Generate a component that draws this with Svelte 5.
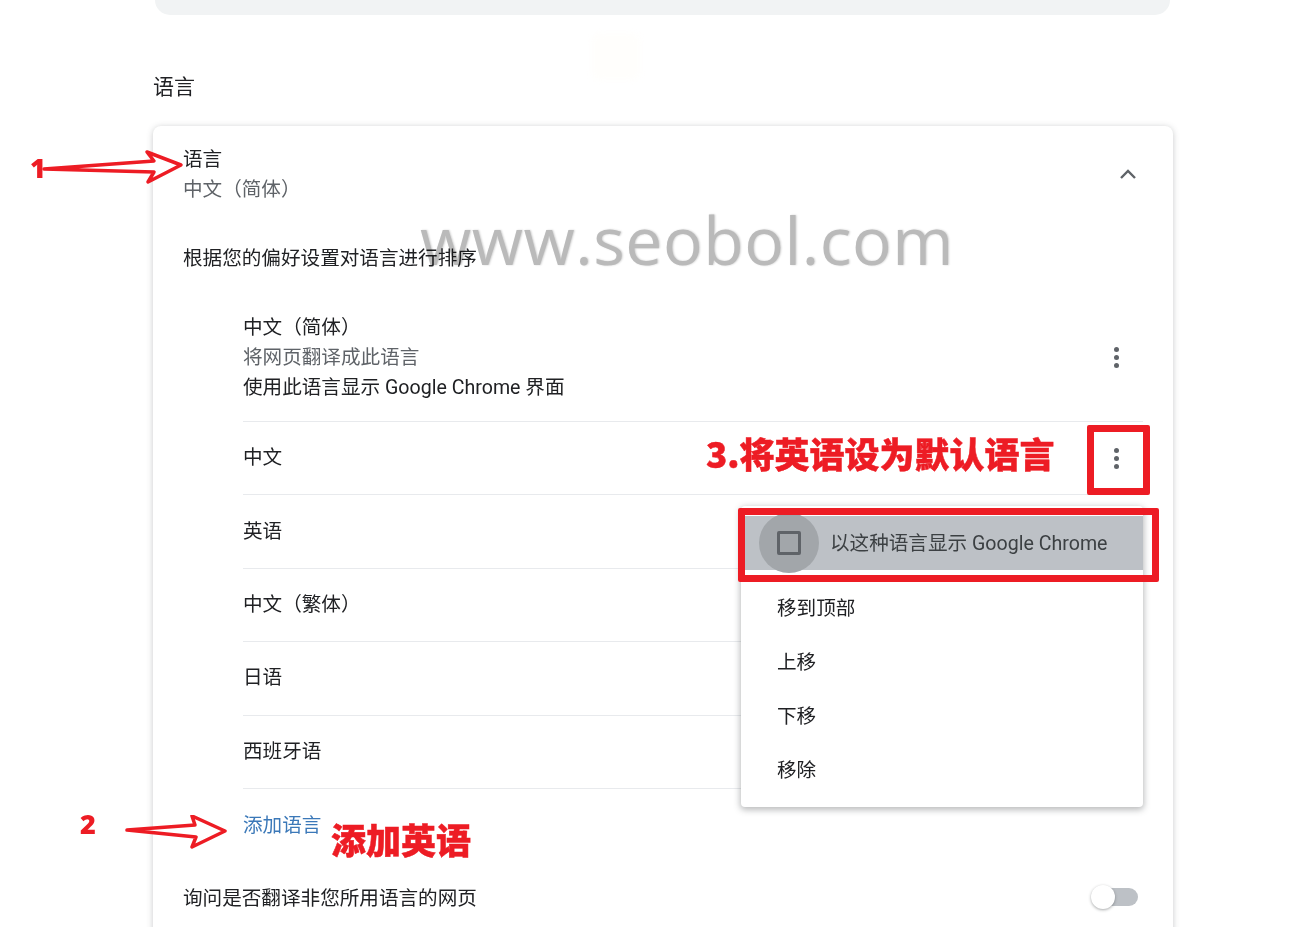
<script>
	const rows = ['英语', '中文（繁体）', '日语', '西班牙语'];
	const menuItems = ['移到顶部', '上移', '下移', '移除'];
</script>

<div class="page">
	<div class="topbar"></div>
	<h2 class="section">语言</h2>

	<section class="card">
		<header class="card-head">
			<div>
				<div class="title">语言</div>
				<div class="sub">中文（简体）</div>
			</div>
			<svg class="chevron" width="24" height="24" viewBox="0 0 24 24">
				<path d="M5 16 L12 9 L19 16" fill="none" stroke="#5f6368" stroke-width="2.4" />
			</svg>
		</header>

		<div class="order">根据您的偏好设置对语言进行排序</div>

		<ul class="langs">
			<li class="lang first">
				<div>
					<div class="line">中文（简体）</div>
					<div class="line muted">将网页翻译成此语言</div>
					<div class="line">使用此语言显示 Google Chrome 界面</div>
				</div>
				<span class="dots"><i></i><i></i><i></i></span>
			</li>
			<li class="lang">
				<span>中文</span>
				<span class="dots"><i></i><i></i><i></i></span>
			</li>
			{#each rows as row}
				<li class="lang"><span>{row}</span></li>
			{/each}
		</ul>

		<a class="add" href="#add">添加语言</a>

		<div class="ask">
			<span>询问是否翻译非您所用语言的网页</span>
			<span class="toggle"><span class="knob"></span></span>
		</div>
	</section>

	<div class="menu">
		<div class="menu-top">
			<span class="ripple"><span class="check"></span></span>
			<span class="menu-label">以这种语言显示 Google Chrome</span>
		</div>
		{#each menuItems as item}
			<div class="menu-item">{item}</div>
		{/each}
	</div>

	<div class="watermark">www.seobol.com</div>
	<div class="faint"></div>

	<div class="mark box-dots"></div>
	<div class="mark box-row"></div>
	<div class="note note-3">3.将英语设为默认语言</div>
	<div class="note note-add">添加英语</div>
	<div class="num num-1">1</div>
	<div class="num num-2">2</div>

	<svg class="arrow arrow-1" width="146" height="36" viewBox="0 0 146 36">
		<path d="M2 19 L112 11 L105 2 L139 15 L106 32 L112 22 Z" fill="#fff" stroke="#ed1c24" stroke-width="3.5" stroke-linejoin="round" />
	</svg>
	<svg class="arrow arrow-2" width="104" height="36" viewBox="0 0 104 36">
		<path d="M2 15 L70 10 L67 1 L100 16 L67 32 L71 22 Z" fill="#fff" stroke="#ed1c24" stroke-width="3.5" stroke-linejoin="round" />
	</svg>
</div>

<style>
	:global(body) {
		background: #fff;
	}

	.page {
		position: relative;
		height: 927px;
		overflow: hidden;
		padding-left: 153px;
		box-sizing: border-box;
		font-family: Roboto, "Noto Sans CJK SC", sans-serif;
		font-size: 19.6px;
		font-weight: 400;
		color: #202124;
	}

	.topbar {
		width: 1015px;
		height: 15px;
		margin-left: 2px;
		background: #f1f3f4;
		border-radius: 0 0 24px 24px;
	}

	.section {
		margin: 57px 0 24px;
		height: 30px;
		line-height: 30px;
		font-size: 21px;
		font-weight: 400;
	}

	.card {
		width: 1020px;
		height: 860px;
		box-sizing: border-box;
		padding: 19px 30px 0;
		background: #fff;
		border-radius: 8px;
		box-shadow: 0 1px 6px rgba(60, 64, 67, 0.28);
	}

	.card-head {
		display: flex;
		justify-content: space-between;
		align-items: center;
		height: 60px;
		padding-right: 2px;
	}

	.title {
		line-height: 30px;
	}

	.sub {
		line-height: 30px;
		color: #5f6368;
	}

	.chevron {
		margin-bottom: 2px;
		margin-right: 1px;
	}

	.order {
		margin-top: 39px;
		line-height: 30px;
	}

	.langs {
		list-style: none;
		margin: 31px 0 0;
		padding: 0 0 0 60px;
	}

	.lang {
		display: flex;
		justify-content: space-between;
		align-items: center;
		height: 73.4px;
		box-sizing: border-box;
		padding-right: 14px;
		border-bottom: 1px solid #e8eaed;
		line-height: 30px;
	}

	.lang.first {
		height: 117px;
		padding-bottom: 10px;
	}

	.first .dots {
		margin-bottom: 2px;
	}

	.muted {
		color: #5f6368;
	}

	.dots {
		display: flex;
		flex-direction: column;
		gap: 3px;
		margin-right: 10px;
	}

	.dots i {
		display: block;
		width: 5px;
		height: 5px;
		border-radius: 50%;
		background: #5f6368;
	}

	.add {
		display: block;
		margin: 22px 0 0 60px;
		line-height: 30px;
		color: #3b78b8;
		text-decoration: none;
	}

	.ask {
		display: flex;
		justify-content: space-between;
		align-items: center;
		margin-top: 41px;
		height: 30px;
		padding-right: 5px;
	}

	.toggle {
		position: relative;
		display: block;
		width: 36px;
		height: 18px;
		border-radius: 9px;
		background: #bdc1c6;
	}

	.knob {
		position: absolute;
		left: -11px;
		top: -3px;
		width: 24px;
		height: 24px;
		border-radius: 50%;
		background: #fff;
		box-shadow: 0 1px 3px rgba(60, 64, 67, 0.45);
	}

	.menu {
		position: absolute;
		left: 741px;
		top: 506px;
		width: 402px;
		height: 301px;
		box-sizing: border-box;
		padding-top: 10px;
		background: #fff;
		border-radius: 4px;
		box-shadow: 0 2px 6px 1px rgba(60, 64, 67, 0.35);
	}

	.menu-top {
		display: flex;
		align-items: center;
		height: 54px;
		margin-left: 4px;
		margin-bottom: 9px;
		background: #bdc1c6;
		color: #3c4043;
	}

	.menu-label {
		padding-bottom: 3px;
		margin-left: -1px;
	}

	.ripple {
		display: flex;
		justify-content: center;
		align-items: center;
		width: 60px;
		height: 60px;
		margin: 0 12px 0 14px;
		border-radius: 50%;
		background: #a2a6aa;
		flex: none;
	}

	.check {
		display: block;
		width: 24px;
		height: 24px;
		box-sizing: border-box;
		border: 3px solid #5f6368;
		border-radius: 2px;
	}

	.menu-item {
		display: flex;
		align-items: center;
		height: 54px;
		padding-left: 36px;
	}

	.watermark {
		position: absolute;
		left: 420px;
		top: 197px;
		font-family: "Open Sans", sans-serif;
		font-size: 66px;
		line-height: 84px;
		letter-spacing: 0.6px;
		font-weight: 400;
		color: #bababa;
		text-shadow: 1px 0 2px #d0d0d0;
		mix-blend-mode: multiply;
	}

	.faint {
		position: absolute;
		left: 592px;
		top: 33px;
		width: 48px;
		height: 47px;
		background: #fffefc;
		border-radius: 8px;
		filter: blur(3px);
	}

	.mark {
		position: absolute;
		box-sizing: border-box;
		border: 7px solid #ed1c24;
		border-radius: 2px;
	}

	.box-dots {
		left: 1087px;
		top: 425px;
		width: 63px;
		height: 70px;
	}

	.box-row {
		left: 738px;
		top: 508px;
		width: 421px;
		height: 74px;
	}

	.note,
	.num {
		position: absolute;
		color: #ed1c24;
		font-family: "Noto Sans CJK SC", sans-serif;
		font-weight: 900;
		text-shadow: 0 0 3px #fff, 0 0 3px #fff;
	}

	.note {
		-webkit-text-stroke: 0.5px #ed1c24;
	}

	.note-3 {
		left: 706px;
		top: 429px;
		font-size: 35px;
		line-height: 48px;
		white-space: nowrap;
	}

	.note-add {
		left: 331px;
		top: 814px;
		font-size: 35px;
		line-height: 50px;
	}

	.num {
		font-family: "Open Sans", sans-serif;
		font-weight: 800;
		font-size: 27px;
		line-height: 34px;
	}

	.num-1 {
		left: 30px;
		top: 151px;
	}

	.num-2 {
		left: 80px;
		top: 807px;
	}

	.arrow {
		position: absolute;
	}

	.arrow-1 {
		left: 42px;
		top: 150px;
	}

	.arrow-2 {
		left: 125px;
		top: 815px;
	}
</style>
